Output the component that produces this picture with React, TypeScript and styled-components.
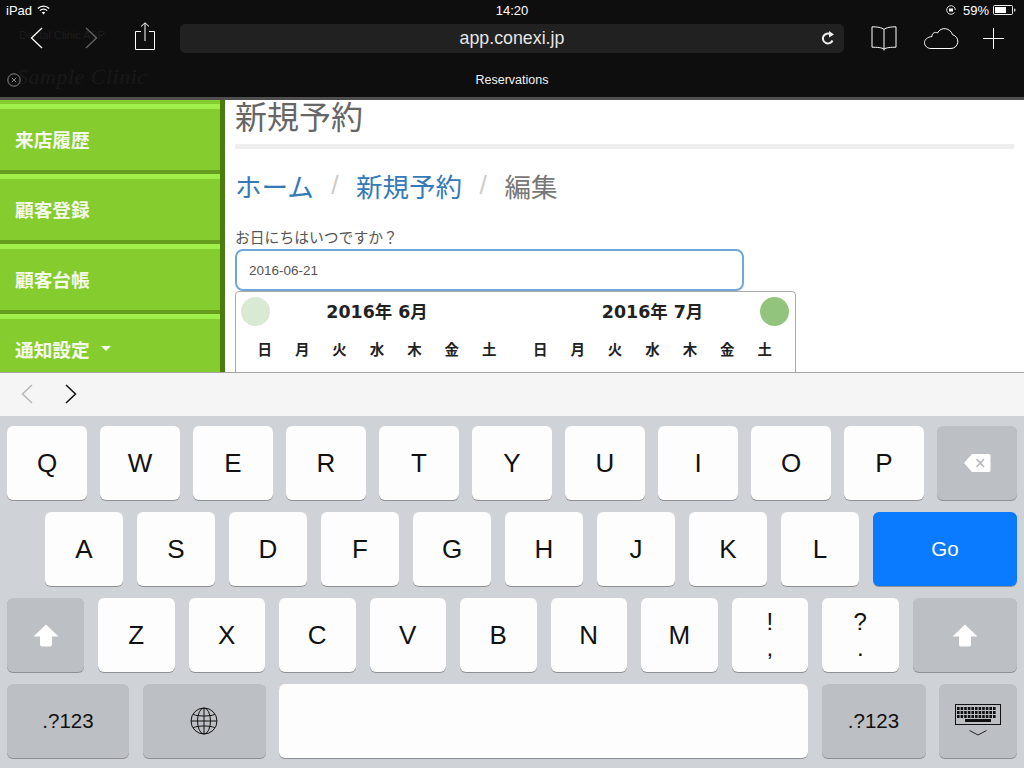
import React from "react";
import styled, { createGlobalStyle } from "styled-components";

const JP = `"Liberation Sans", "Noto Sans CJK JP", sans-serif`;

const GlobalStyle = createGlobalStyle`
    html, body {
        margin: 0;
        padding: 0;
        background: #000;
    }
    body {
        font-family: ${JP};
    }
`;

const NAV_ITEMS = ["来店履歴", "顧客登録", "顧客台帳", "通知設定"];
const WEEK = ["日", "月", "火", "水", "木", "金", "土"];

type KeyKind = "light" | "dark" | "blue";
interface KeyDef {
    label?: string;
    sub?: string;
    w: number;
    kind?: KeyKind;
    small?: boolean;
    icon?: "back" | "shift" | "globe" | "keyboard";
}

const ROW1: KeyDef[] = [
    ..."QWERTYUIOP".split("").map((label) => ({ label, w: 80 })),
    { icon: "back", w: 80, kind: "dark" as KeyKind }
];
const ROW2: KeyDef[] = [
    ..."ASDFGHJKL".split("").map((label) => ({ label, w: 78 })),
    { label: "Go", w: 144, kind: "blue" as KeyKind, small: true }
];
const ROW3: KeyDef[] = [
    { icon: "shift", w: 77, kind: "dark" as KeyKind },
    ..."ZXCVBNM".split("").map((label) => ({ label, w: 76.5 })),
    { label: "!", sub: ",", w: 76.5 },
    { label: "?", sub: ".", w: 76.5 },
    { icon: "shift", w: 104.5, kind: "dark" as KeyKind }
];
const ROW4: KeyDef[] = [
    { label: ".?123", w: 122, kind: "dark" as KeyKind, small: true },
    { icon: "globe", w: 123, kind: "dark" as KeyKind },
    { w: 529 },
    { label: ".?123", w: 104, kind: "dark" as KeyKind, small: true },
    { icon: "keyboard", w: 78, kind: "dark" as KeyKind }
];

function KeyIcon({ name }: { name: NonNullable<KeyDef["icon"]> }) {
    if (name === "back") {
        return (
            <svg width="28" height="20" viewBox="0 0 28 20">
                <path d="M9 1h17a1.5 1.5 0 0 1 1.5 1.5v15a1.5 1.5 0 0 1-1.5 1.5H9L1 10z" fill="#fff" />
                <path d="M13.5 6l7.5 8M21 6l-7.5 8" stroke="#b4b6ba" strokeWidth="1.6" />
            </svg>
        );
    }
    if (name === "shift") {
        return (
            <svg width="26" height="23" viewBox="0 0 26 23">
                <path d="M13 0.5L25.5 12.5H19V20.5a2 2 0 0 1-2 2H9a2 2 0 0 1-2-2V12.5H0.5z" fill="#fff" />
            </svg>
        );
    }
    if (name === "globe") {
        return (
            <svg width="28" height="28" viewBox="0 0 28 28" fill="none" stroke="#111" strokeWidth="1">
                <circle cx="14" cy="14" r="13" />
                <ellipse cx="14" cy="14" rx="6.5" ry="13" />
                <path d="M14 1v26M1 14h26M3.2 7.5c6 2 15.600 2 21.600 0M3.200 20.500c6-2 15.600-2 21.600 0" />
            </svg>
        );
    }
    const dots: React.ReactNode[] = [];
    for (let r = 0; r < 3; r++) {
        for (let c = 0; c < 11; c++) {
            dots.push(<rect key={`${r}-${c}`} x={3 + c * 3.6} y={3 + r * 4} width="2.6" height="3" fill="#111" />);
        }
    }
    return (
        <svg width="48" height="34" viewBox="0 0 48 34" fill="none">
            <rect x="1.500" y="0.500" width="45" height="20" stroke="#111" />
            {dots}
            <rect x="11" y="15" width="26" height="3" fill="#111" />
            <path d="M15.500 26.500l8.500 4.500 8.500-4.500" stroke="#222" />
        </svg>
    );
}

function KeyRow({ keys, $gap, $left }: { keys: KeyDef[]; $gap: number; $left: number }) {
    return (
        <Row $gap={$gap} $left={$left}>
            {keys.map((k, i) => (
                <Key key={i} $w={k.w} $kind={k.kind ?? "light"} $small={k.small}>
                    {k.icon && <KeyIcon name={k.icon} />}
                    {k.sub ? (
                        <Stacked>
                            <span>{k.label}</span>
                            <span>{k.sub}</span>
                        </Stacked>
                    ) : (
                        k.label
                    )}
                </Key>
            ))}
        </Row>
    );
}

function Month({ title }: { title: string }) {
    return (
        <MonthBox>
            <MonthTitle>{title}</MonthTitle>
            <WeekRow>
                {WEEK.map((d) => (
                    <WeekCell key={d}>{d}</WeekCell>
                ))}
            </WeekRow>
        </MonthBox>
    );
}

export default function App() {
    return (
        <Screen>
            <GlobalStyle />
            <TopBar>
                <GhostTitle>Dental Clinic ASP</GhostTitle>
                <GhostLogo>Sample Clinic</GhostLogo>
                <StatusBar>
                    <StatusSide>
                        <span>iPad</span>
                        <svg width="13" height="10" viewBox="0 0 13 10" fill="none" stroke="#fff">
                            <path d="M0.800 3.500a8 8 0 0 1 11.400 0" strokeWidth="1.300" />
                            <path d="M2.900 5.600a5 5 0 0 1 7.200 0" strokeWidth="1.300" />
                            <path d="M6.500 9.500L4.800 7.600a2.400 2.400 0 0 1 3.400 0z" fill="#fff" stroke="none" />
                        </svg>
                    </StatusSide>
                    <Clock>14:20</Clock>
                    <StatusRight>
                        <svg width="10" height="10" viewBox="0 0 10 10" fill="none">
                            <path d="M8.500 7.500A4.300 4.300 0 1 1 9.300 5" stroke="#ddd" />
                            <rect x="3" y="3.500" width="4" height="3" fill="#fff" />
                        </svg>
                        <span>59%</span>
                        <svg width="23" height="10" viewBox="0 0 23 10">
                            <rect x="0.500" y="0.500" width="19" height="9" rx="1" fill="none" stroke="#eee" />
                            <rect x="2" y="2" width="11" height="6" fill="#fff" />
                            <path d="M21 3.500c1 0 1.500.5 1.500 1.500s-.5 1.500-1.500 1.500z" fill="#ccc" />
                        </svg>
                    </StatusRight>
                </StatusBar>
                <Toolbar>
                    <NavArrows>
                        <svg width="13" height="22" viewBox="0 0 13 22" fill="none" stroke="#fff" strokeWidth="1.300">
                            <path d="M12 1L1.500 11 12 21" />
                        </svg>
                        <svg width="13" height="22" viewBox="0 0 13 22" fill="none" stroke="#666" strokeWidth="1.300">
                            <path d="M1 1l10.500 10L1 21" />
                        </svg>
                    </NavArrows>
                    <ShareSlot>
                        <svg width="20" height="28" viewBox="0 0 20 28" fill="none" stroke="#fff">
                            <path d="M6 9.500H0.500v18h19v-18H14M10 19V1M6 4.500L10 .8l4 3.700" />
                        </svg>
                    </ShareSlot>
                    <UrlBar>
                        <UrlText>app.conexi.jp</UrlText>
                        <ReloadSlot>
                            <svg width="14" height="15" viewBox="0 0 14 15" fill="none">
                                <path d="M11.500 9.500A5 5 0 1 1 9.500 3.200" stroke="#eee" strokeWidth="2" />
                                <path d="M8 0l5 3.500L8 6.500z" fill="#eee" />
                            </svg>
                        </ReloadSlot>
                    </UrlBar>
                    <ToolIcons>
                        <svg width="26" height="25" viewBox="0 0 26 25" fill="none" stroke="#fff">
                            <path d="M13 3.500C11 1.500 6 .8 1 .8v20.400c5 0 10 .3 12 2 2-1.700 7-2 12-2V.8c-5 0-10 .7-12 2.700zM13 3.500V24.500" strokeLinejoin="round" />
                        </svg>
                        <svg width="35" height="22" viewBox="0 0 35 22" fill="none" stroke="#fff">
                            <path d="M7 21.500H27a7 7 0 0 0 1.500-13.800C26.500 1 17-1 13.500 6 11 4.500 8 6 8 9.500 3 10 .5 13 .5 15.500c0 3.500 3 6 6.500 6z" />
                        </svg>
                        <svg width="21" height="21" viewBox="0 0 21 21" fill="none" stroke="#fff">
                            <path d="M10.500 0v21M0 10.500h21" />
                        </svg>
                    </ToolIcons>
                </Toolbar>
                <TabRow>
                    <CloseSlot>
                        <svg width="14" height="14" viewBox="0 0 14 14" fill="none" stroke="#8a8a8a">
                            <circle cx="7" cy="7" r="6.200" />
                            <path d="M4.800 4.800l4.400 4.400M9.200 4.800l-4.400 4.400" />
                        </svg>
                    </CloseSlot>
                    Reservations
                </TabRow>
            </TopBar>
            <Page>
                <Sidebar>
                    <SideTop />
                    {NAV_ITEMS.map((item, i) => (
                        <NavItem key={item}>
                            {item}
                            {i === 3 && <Caret />}
                        </NavItem>
                    ))}
                </Sidebar>
                <Content>
                    <Title>新規予約</Title>
                    <Breadcrumb>
                        <Crumb>ホーム</Crumb>
                        <Slash>/</Slash>
                        <Crumb>新規予約</Crumb>
                        <Slash>/</Slash>
                        <CrumbActive>編集</CrumbActive>
                    </Breadcrumb>
                    <Label>お日にちはいつですか？</Label>
                    <DateField>2016-06-21</DateField>
                    <Calendar>
                        <PrevButton />
                        <NextButton />
                        <Month title="2016年 6月" />
                        <Month title="2016年 7月" />
                    </Calendar>
                </Content>
            </Page>
            <Accessory>
                <svg width="12" height="20" viewBox="0 0 12 20" fill="none" stroke="#b5b5b5" strokeWidth="1.500">
                    <path d="M11 1L1.500 10 11 19" />
                </svg>
                <svg width="12" height="20" viewBox="0 0 12 20" fill="none" stroke="#111" strokeWidth="1.500">
                    <path d="M1 1l9.500 9L1 19" />
                </svg>
            </Accessory>
            <Keyboard>
                <KeyRow keys={ROW1} $gap={13} $left={0} />
                <KeyRow keys={ROW2} $gap={14} $left={38} />
                <KeyRow keys={ROW3} $gap={14} $left={0} />
                <KeyRow keys={ROW4} $gap={13.500} $left={0} />
            </Keyboard>
        </Screen>
    );
}

const Screen = styled.div`
    width: 1024px;
    height: 768px;
    overflow: hidden;
    display: flex;
    flex-direction: column;
    background: #fff;
`;
const TopBar = styled.header`
    position: relative;
    height: 97px;
    box-sizing: content-box;
    background: #0e0e0e;
    border-bottom: 3px solid #4f4f4f;
    color: #fff;
    flex-shrink: 0;
`;
const GhostTitle = styled.div`
    position: absolute;
    left: 19px;
    top: 29px;
    font-size: 11px;
    color: #1d1d1d;
`;
const GhostLogo = styled.div`
    position: absolute;
    left: 17px;
    top: 64px;
    font: italic 22px "Liberation Serif", serif;
    letter-spacing: 0.5px;
    color: #191919;
`;
const StatusBar = styled.div`
    position: relative;
    height: 20px;
    padding: 0 8px 0 6px;
    display: flex;
    align-items: center;
    justify-content: space-between;
    font-size: 13px;
`;
const StatusSide = styled.div`
    display: flex;
    align-items: center;
    gap: 5px;
`;
const StatusRight = styled(StatusSide)`
    gap: 4px;
    & > svg:first-child {
        margin-right: 3px;
    }
`;
const Clock = styled.span`
    position: absolute;
    left: 0;
    right: 0;
    text-align: center;
`;
const Toolbar = styled.div`
    position: relative;
    display: flex;
    align-items: center;
    height: 36px;
    margin-top: 0;
`;
const NavArrows = styled.div`
    display: flex;
    gap: 42px;
    margin-left: 30px;
    width: 105px;
`;
const ShareSlot = styled.div`
    display: flex;
    margin-top: -4px;
`;
const UrlBar = styled.div`
    position: relative;
    width: 664px;
    height: 29px;
    margin-left: 25px;
    border-radius: 5px;
    background: #212121;
    display: flex;
    align-items: center;
    justify-content: center;
`;
const UrlText = styled.span`
    font-size: 17.800px;
    color: #e6e6e6;
    padding-top: 1px;
`;
const ReloadSlot = styled.span`
    position: absolute;
    right: 9px;
    top: 7px;
    display: flex;
`;
const ToolIcons = styled.div`
    display: flex;
    align-items: center;
    margin-left: 27px;
    gap: 27px;
    & > svg:nth-child(3) {
        margin-left: -3px;
    }
`;
const TabRow = styled.div`
    position: relative;
    height: 41px;
    box-sizing: border-box;
    padding-top: 7px;
    display: flex;
    align-items: center;
    justify-content: center;
    font-size: 12.5px;
    font-weight: 500;
    color: #f2f2f2;
`;
const CloseSlot = styled.span`
    position: absolute;
    left: 7px;
    top: 17px;
    display: flex;
`;
const Page = styled.div`
    display: flex;
    height: 272px;
    flex-shrink: 0;
    overflow: hidden;
    border-bottom: 1px solid #a5a5a5;
`;
const Sidebar = styled.nav`
    width: 220px;
    border-right: 5px solid #4a7c10;
    background: #85cc2f;
    flex-shrink: 0;
`;
const SideTop = styled.div`
    height: 4px;
`;
const NavItem = styled.div`
    box-sizing: border-box;
    height: 70px;
    padding: 0 0 2px 15px;
    border-top: 5px solid #a0ef4a;
    border-bottom: 4px solid #659e1e;
    display: flex;
    align-items: center;
    font-size: 18.700px;
    font-weight: 700;
    color: #f4f9ec;
    background: #85cc2f;
`;
const Caret = styled.span`
    width: 0;
    height: 0;
    margin-left: 11px;
    border-left: 5px solid transparent;
    border-right: 5px solid transparent;
    border-top: 5px solid #f4f9ec;
`;
const Content = styled.main`
    flex: 1;
    padding: 0 10px;
    min-width: 0;
`;
const Title = styled.h1`
    margin: 0;
    height: 44px;
    border-bottom: 5px solid #eeeeee;
    font-size: 32px;
    line-height: 36px;
    font-weight: 400;
    color: #666;
`;
const Breadcrumb = styled.div`
    display: flex;
    align-items: center;
    height: 40px;
    margin-top: 16px;
    font-size: 26.500px;
`;
const Crumb = styled.span`
    color: #337ab7;
`;
const CrumbActive = styled.span`
    color: #777;
`;
const Slash = styled.span`
    color: #ccc;
    margin: 0 17.500px;
`;
const Label = styled.div`
    margin-top: 23px;
    font-size: 14.800px;
    line-height: 20px;
    color: #555;
`;
const DateField = styled.div`
    box-sizing: border-box;
    width: 509px;
    height: 42px;
    margin-top: 1px;
    padding-left: 12px;
    display: flex;
    align-items: center;
    border: 2px solid #6fa8d6;
    border-radius: 8px;
    font-size: 13.500px;
    color: #555;
`;
const Calendar = styled.div`
    position: relative;
    box-sizing: border-box;
    width: 561px;
    height: 120px;
    padding: 0 10px;
    display: flex;
    gap: 13.500px;
    border: 1px solid #aaa;
    border-radius: 4px;
`;
const PrevButton = styled.span`
    position: absolute;
    left: 5px;
    top: 5px;
    width: 29px;
    height: 29px;
    border-radius: 50%;
    background: #d9e9d3;
`;
const NextButton = styled(PrevButton)`
    left: auto;
    right: 6px;
    background: #93c47d;
`;
const MonthBox = styled.div`
    width: 262px;
    font-family: "DejaVu Sans", "Noto Sans CJK JP", sans-serif;
    font-weight: 700;
    color: #222;
`;
const MonthTitle = styled.div`
    height: 39px;
    line-height: 41px;
    text-align: center;
    font-size: 17.400px;
`;
const WeekRow = styled.div`
    display: grid;
    grid-template-columns: repeat(7, 1fr);
    height: 35px;
    align-items: center;
    text-align: center;
    font-size: 14.500px;
`;
const WeekCell = styled.span`
    display: block;
`;
const Accessory = styled.div`
    height: 43px;
    box-sizing: border-box;
    padding: 0 0 2px 21px;
    flex-shrink: 0;
    background: #f5f5f5;
    display: flex;
    align-items: center;
    gap: 32px;
`;
const Keyboard = styled.div`
    flex: 1;
    background: #cfd2d6;
    padding: 10px 7px 0;
    display: flex;
    flex-direction: column;
    gap: 12px;
`;
const Row = styled.div<{ $gap: number; $left: number }>`
    display: flex;
    gap: ${(p) => p.$gap}px;
    padding-left: ${(p) => p.$left}px;
`;
const KEY_BG: Record<KeyKind, string> = {
    light: "#fdfdfd",
    dark: "#bcbfc3",
    blue: "#0a7aff"
};
const Key = styled.div<{ $w: number; $kind: KeyKind; $small?: boolean }>`
    width: ${(p) => p.$w}px;
    height: 74px;
    flex-shrink: 0;
    display: flex;
    align-items: center;
    justify-content: center;
    border-radius: 6px;
    background: ${(p) => KEY_BG[p.$kind]};
    box-shadow: 0 1px 0 #8e9093;
    color: ${(p) => (p.$kind === "blue" ? "#fff" : "#111")};
    font-size: ${(p) => (p.$small ? 20.5 : 26)}px;
`;
const Stacked = styled.div`
    display: flex;
    flex-direction: column;
    align-items: center;
    font-size: 24px;
    line-height: 26px;
`;
